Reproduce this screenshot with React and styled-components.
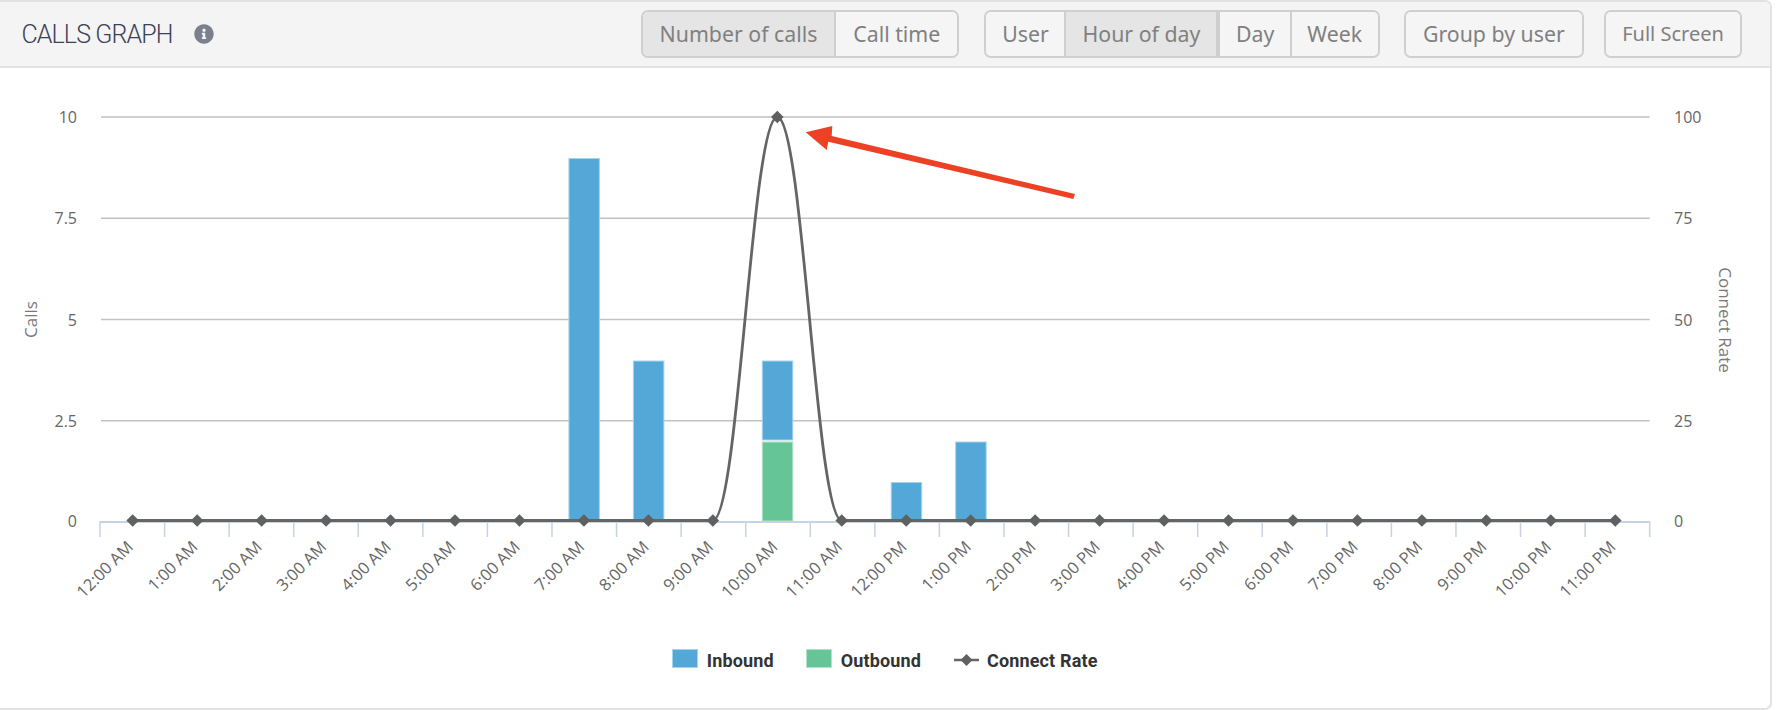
import React from "react";
import styled, { createGlobalStyle } from "styled-components";
import { FaInfoCircle } from "react-icons/fa";

const Global = createGlobalStyle`
  html, body { margin: 0; padding: 0; background: #fff; }
  body { font-family: "Noto Sans", sans-serif; }
`;

const Panel = styled.section`
  box-sizing: border-box;
  width: 1772px;
  height: 710px;
  border: 2px solid #e2e2e2;
  border-left: none;
  border-radius: 0 7px 7px 0;
  display: flex;
  flex-direction: column;
  overflow: hidden;
`;

const Header = styled.header`
  box-sizing: border-box;
  height: 66px;
  flex: none;
  display: flex;
  align-items: center;
  padding: 0 28px 0 21.5px;
  background: #f4f4f4;
  border-bottom: 2px solid #e2e2e2;
`;

const Title = styled.h2`
  margin: 0;
  font-family: "Roboto", sans-serif;
  font-weight: 300;
  font-size: 25px;
  letter-spacing: -0.9px;
  color: #3b4156;
`;

const InfoIcon = styled(FaInfoCircle)`
  margin-left: 22px;
  width: 20px;
  height: 20px;
  color: #7b7f8e;
`;

const Toolbar = styled.div`
  margin-left: auto;
  display: flex;
  align-items: center;
`;

const ButtonGroup = styled.div`
  display: flex;
  height: 48px;
  box-sizing: border-box;
  margin-left: ${(p) => p.$gap}px;
  border: 2px solid #cfcfcf;
  border-radius: 7px;
  overflow: hidden;
`;

const Segment = styled.button`
  box-sizing: border-box;
  width: ${(p) => p.$width}px;
  height: 100%;
  padding: 0 0 2px;
  border: none;
  border-left: ${(p) => (p.$first ? 0 : p.$heavy ? 4 : 2)}px solid #cfcfcf;
  background: ${(p) => (p.$active ? "#e5e5e5" : "#f5f5f5")};
  color: #808080;
  font-family: "Noto Sans", sans-serif;
  font-size: ${(p) => p.$size || 21.3}px;
  white-space: nowrap;
`;

const Body = styled.div`
  flex: 1;
  min-height: 0;
  display: flex;
  flex-direction: column;
`;

const ChartSvg = styled.svg`
  display: block;
  flex: none;
`;

const TickLabel = styled.text`
  font-family: "Open Sans", sans-serif;
  font-weight: 400;
  font-size: ${(p) => p.$size || 16}px;
  fill: #666;
`;

const AxisTitle = styled.text`
  font-family: "Open Sans", sans-serif;
  font-weight: 400;
  font-size: 17px;
  fill: #7a7a7a;
`;

const Legend = styled.div`
  display: flex;
  justify-content: center;
  align-items: center;
  gap: 32.5px;
  margin-top: 15px;
`;

const LegendItem = styled.div`
  display: flex;
  align-items: center;
  gap: 8.4px;
  font-family: "Roboto", sans-serif;
  font-weight: 700;
  font-size: 18px;
  letter-spacing: 0.15px;
  color: #333;
`;

const Swatch = styled.span`
  display: block;
  width: 26px;
  height: 19px;
  margin-bottom: 3px;
  background: ${(p) => p.$color};
  box-shadow: inset 0 0 0 1px ${(p) => p.$edge};
`;

const SVG_Y = 68;
const TOP = 117 - SVG_Y;
const AXIS = 522 - SVG_Y;
const SERIES_ZERO = 520.5 - SVG_Y;
const LEFT = 100;
const TICK_PITCH = 64.57;
const RIGHT = LEFT + 24 * TICK_PITCH;
const cx = (i) => 132.7 + 64.46 * i;
const vy = (v) => AXIS - (v / 10) * (AXIS - TOP);

const hours = [
  "12:00 AM", "1:00 AM", "2:00 AM", "3:00 AM", "4:00 AM", "5:00 AM", "6:00 AM", "7:00 AM",
  "8:00 AM", "9:00 AM", "10:00 AM", "11:00 AM", "12:00 PM", "1:00 PM", "2:00 PM", "3:00 PM",
  "4:00 PM", "5:00 PM", "6:00 PM", "7:00 PM", "8:00 PM", "9:00 PM", "10:00 PM", "11:00 PM",
];

const grid = [
  { v: 10, l: "10", r: "100" },
  { v: 7.5, l: "7.5", r: "75" },
  { v: 5, l: "5", r: "50" },
  { v: 2.5, l: "2.5", r: "25" },
];

const BLUE = { fill: "#53a8d8", edge: "#a5d4ee" };
const GREEN = { fill: "#66c596", edge: "#b0e3ca" };

const bars = [
  { i: 7, from: 0, to: 9, ...BLUE },
  { i: 8, from: 0, to: 4, ...BLUE },
  { i: 10, from: 0, to: 2, ...GREEN },
  { i: 10, from: 2, to: 4, ...BLUE },
  { i: 12, from: 0, to: 1, ...BLUE },
  { i: 13, from: 0, to: 2, ...BLUE },
];

const linePath = () => {
  const c = 64.46 / 2.5;
  return [
    `M${cx(0)} ${SERIES_ZERO}`,
    `L${cx(9)} ${SERIES_ZERO}`,
    `C${cx(9) + c} ${SERIES_ZERO} ${cx(10) - c} ${TOP} ${cx(10)} ${TOP}`,
    `C${cx(10) + c} ${TOP} ${cx(11) - c} ${SERIES_ZERO} ${cx(11)} ${SERIES_ZERO}`,
    `L${cx(23)} ${SERIES_ZERO}`,
  ].join(" ");
};

const Diamond = ({ x, y, r = 6.3 }) => (
  <path d={`M${x} ${y - r} L${x + r} ${y} L${x} ${y + r} L${x - r} ${y} Z`} fill="#606060" />
);

const Chart = () => (
  <ChartSvg width="1770" height="566" viewBox="0 0 1770 566">
    {grid.map((g) => (
      <g key={g.v}>
        <line x1="101" x2={RIGHT} y1={vy(g.v)} y2={vy(g.v)} stroke="#c2c2c2" strokeWidth="1.5" />
        <TickLabel x="77" y={vy(g.v) + 6} textAnchor="end">{g.l}</TickLabel>
        <TickLabel x="1674" y={vy(g.v) + 6}>{g.r}</TickLabel>
      </g>
    ))}
    <TickLabel x="77" y={AXIS + 5} textAnchor="end">0</TickLabel>
    <TickLabel x="1674" y={AXIS + 5}>0</TickLabel>

    <AxisTitle transform="translate(37 251.5) rotate(-90)" textAnchor="middle">Calls</AxisTitle>
    <AxisTitle transform="translate(1719 252) rotate(90)" textAnchor="middle">Connect Rate</AxisTitle>

    {bars.map((b) => (
      <rect
        key={`${b.i}-${b.from}`}
        x={cx(b.i) - 15}
        y={vy(b.to) + 1}
        width="30.5"
        height={vy(b.from) - vy(b.to) - 2}
        fill={b.fill}
        stroke={b.edge}
        strokeWidth="1"
      />
    ))}

    <line x1={LEFT} x2={RIGHT} y1={AXIS} y2={AXIS} stroke="#c6d3e3" strokeWidth="2" />
    {Array.from({ length: 25 }, (_, i) => (
      <line key={i} x1={LEFT + TICK_PITCH * i} x2={LEFT + TICK_PITCH * i} y1={AXIS - 1} y2={AXIS + 15} stroke="#c6d3e3" strokeWidth="1.5" />
    ))}

    <path d={linePath()} fill="none" stroke="#656565" strokeWidth="2.8" />
    {hours.map((h, i) => (
      <Diamond key={h} x={cx(i)} y={i === 10 ? TOP : SERIES_ZERO} />
    ))}

    {hours.map((h, i) => (
      <TickLabel key={h} $size={16.5} transform={`translate(${cx(i) + 1.5} ${AXIS + 26}) rotate(-45)`} textAnchor="end">{h}</TickLabel>
    ))}

    <path
      d="M805.7 64.3 L832.3 58 L831.7 68 L1075 126 L1073.3 131 L828.3 73.7 L826.7 82 Z"
      fill="#ec4124"
    />
  </ChartSvg>
);

const LegendLine = () => (
  <svg width="25" height="14" viewBox="0 0 25 14">
    <line x1="0" x2="25" y1="7" y2="7" stroke="#666" strokeWidth="2.5" />
    <Diamond x={12.5} y={7} r={6} />
  </svg>
);

export default function App() {
  return (
    <>
      <Global />
      <Panel>
        <Header>
          <Title>CALLS GRAPH</Title>
          <InfoIcon />
          <Toolbar>
            <ButtonGroup $gap={0}>
              <Segment $first $active $width={191.3}>Number of calls</Segment>
              <Segment $width={123.3}>Call time</Segment>
            </ButtonGroup>
            <ButtonGroup $gap={25}>
              <Segment $first $width={78}>User</Segment>
              <Segment $active $width={152}>Hour of day</Segment>
              <Segment $heavy $width={73.3}>Day</Segment>
              <Segment $width={88}>Week</Segment>
            </ButtonGroup>
            <ButtonGroup $gap={24.3}>
              <Segment $first $width={175.7}>Group by user</Segment>
            </ButtonGroup>
            <ButtonGroup $gap={20.3}>
              <Segment $first $width={134} $size={20}>Full Screen</Segment>
            </ButtonGroup>
          </Toolbar>
        </Header>
        <Body>
          <Chart />
          <Legend>
            <LegendItem><Swatch $color={BLUE.fill} $edge={BLUE.edge} />Inbound</LegendItem>
            <LegendItem><Swatch $color={GREEN.fill} $edge={GREEN.edge} />Outbound</LegendItem>
            <LegendItem><LegendLine />Connect Rate</LegendItem>
          </Legend>
        </Body>
      </Panel>
    </>
  );
}
